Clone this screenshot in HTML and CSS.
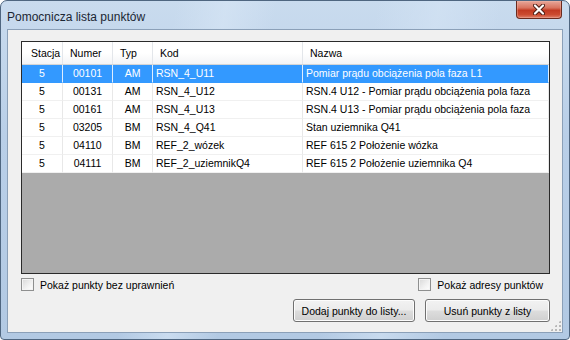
FILE: index.html
```html
<!DOCTYPE html>
<html lang="pl">
<head>
  <meta charset="UTF-8">
  <title>Pomocnicza lista punktów</title>
  <link rel="stylesheet" href="styles.css">
</head>
<body>
  <div class="window">
    <div class="titlebar">
      <span class="title">Pomocnicza lista punktów</span>
      <div class="close-btn">
        <svg width="12" height="11" viewBox="0 0 12 11">
          <path d="M2 1.5 L10 9.5 M10 1.5 L2 9.5" stroke="#4a1a12" stroke-width="4" stroke-linecap="round"/>
          <path d="M2 1.5 L10 9.5 M10 1.5 L2 9.5" stroke="#ffffff" stroke-width="2.2" stroke-linecap="round"/>
        </svg>
      </div>
    </div>
    <div class="client">
      <div class="grid">
        <div class="grid-head">
          <div class="hcell first">Stacja</div>
          <div class="hcell">Numer</div>
          <div class="hcell">Typ</div>
          <div class="hcell">Kod</div>
          <div class="hcell">Nazwa</div>
        </div>
        <div class="grid-row selected">
          <div class="cell center">5</div>
          <div class="cell center">00101</div>
          <div class="cell center">AM</div>
          <div class="cell">RSN_4_U11</div>
          <div class="cell">Pomiar prądu obciążenia pola faza L1</div>
        </div>
        <div class="grid-row">
          <div class="cell center">5</div>
          <div class="cell center">00131</div>
          <div class="cell center">AM</div>
          <div class="cell">RSN_4_U12</div>
          <div class="cell">RSN.4 U12 - Pomiar prądu obciążenia pola faza</div>
        </div>
        <div class="grid-row">
          <div class="cell center">5</div>
          <div class="cell center">00161</div>
          <div class="cell center">AM</div>
          <div class="cell">RSN_4_U13</div>
          <div class="cell">RSN.4 U13 - Pomiar prądu obciążenia pola faza</div>
        </div>
        <div class="grid-row">
          <div class="cell center">5</div>
          <div class="cell center">03205</div>
          <div class="cell center">BM</div>
          <div class="cell">RSN_4_Q41</div>
          <div class="cell">Stan uziemnika Q41</div>
        </div>
        <div class="grid-row">
          <div class="cell center">5</div>
          <div class="cell center">04110</div>
          <div class="cell center">BM</div>
          <div class="cell">REF_2_wózek</div>
          <div class="cell">REF 615 2 Położenie wózka</div>
        </div>
        <div class="grid-row">
          <div class="cell center">5</div>
          <div class="cell center">04111</div>
          <div class="cell center">BM</div>
          <div class="cell">REF_2_uziemnikQ4</div>
          <div class="cell">REF 615 2 Położenie uziemnika Q4</div>
        </div>
      </div>

      <div class="options">
        <label class="check"><span class="box"></span>Pokaż punkty bez uprawnień</label>
        <label class="check"><span class="box"></span>Pokaż adresy punktów</label>
      </div>

      <div class="buttons">
        <button class="btn btn-add">Dodaj punkty do listy...</button>
        <button class="btn btn-remove">Usuń punkty z listy</button>
      </div>

      <div class="grip"></div>
    </div>
  </div>
</body>
</html>
```

FILE: styles.css
```css
html, body {
  margin: 0;
  padding: 0;
  background: #ffffff;
}
body {
  font-family: 'Liberation Sans', Arial, sans-serif;
  font-size: 10.5px;
  color: #000;
}
.window {
  width: 570px;
  height: 340px;
  box-sizing: border-box;
  border: 1px solid #4f6680;
  border-radius: 7px 7px 4px 4px;
  background:
    linear-gradient(100deg, transparent 28%, #d6e5f5aa 36%, transparent 44%, transparent 60%, #d3e3f4aa 70%, transparent 80%),
    linear-gradient(180deg, #c9dbee 0%, #b9cfe8 40%, #b2c9e3 100%);
  display: flex;
  flex-direction: column;
  overflow: hidden;
}
.titlebar {
  height: 28px;
  display: flex;
  justify-content: space-between;
  flex-shrink: 0;
}
.title {
  font-size: 12px;
  color: #1b2633;
  padding: 9px 0 0 6px;
}
.close-btn {
  width: 46px;
  height: 18px;
  margin-right: 7px;
  box-sizing: border-box;
  border: 1px solid #6a2a1e;
  border-top: none;
  border-radius: 0 0 4px 4px;
  background: linear-gradient(180deg, #e8a79a 0%, #d9745f 40%, #c23a22 55%, #cc4b30 80%, #e0806a 100%);
  box-shadow: inset 0 0 0 1px #f0b8aa66;
  display: flex;
  align-items: center;
  justify-content: center;
}
.client {
  flex: 1;
  margin: 0 6px 6px 6px;
  border: 1px solid #8ba0b8;
  background: #f0f0f0;
  padding: 11px 12px 0 13px;
  position: relative;
  display: flex;
  flex-direction: column;
}

/* data grid */
.grid {
  height: 233px;
  box-sizing: border-box;
  border: 1px solid #2a2a2a;
  background: #ababab;
  flex-shrink: 0;
}
.grid-head, .grid-row {
  display: grid;
  grid-template-columns: 41px 50px 40px 150px 1fr;
}
.grid-head {
  height: 23px;
  background: linear-gradient(180deg, #ffffff 0%, #ffffff 50%, #f3f4f6 100%);
  border-bottom: 1px solid #d5d5d5;
  box-sizing: border-box;
}
.hcell {
  line-height: 22px;
  padding-left: 7px;
  border-right: 1px solid #e3e6ea;
  white-space: nowrap;
}
.hcell.first {
  padding-left: 9px;
}
.hcell:last-child {
  border-right: none;
}
.grid-row {
  height: 18px;
  background: #ffffff;
}
.cell {
  line-height: 17px;
  padding-left: 3px;
  border-right: 1px solid #e8e8e8;
  border-bottom: 1px solid #f0f0f0;
  white-space: nowrap;
  overflow: hidden;
}
.cell.center {
  text-align: center;
  padding-left: 0;
}
.grid-row.selected {
  background: #3399ff;
  color: #ffffff;
}
.grid-row.selected .cell {
  border-right-color: #dfeeff;
  border-bottom-color: #3399ff;
}

/* check boxes */
.options {
  display: flex;
  justify-content: space-between;
  margin-top: 3px;
  height: 15px;
  padding-right: 7px;
}
.check {
  display: flex;
  align-items: center;
  gap: 6px;
}
.box {
  width: 13px;
  height: 13px;
  box-sizing: border-box;
  border: 1px solid #8e8f8f;
  background: linear-gradient(135deg, #d8d8d8 0%, #f2f2f2 60%, #ffffff 100%);
  box-shadow: inset 0 0 0 1px #f4f4f4;
}

/* buttons */
.buttons {
  display: flex;
  justify-content: flex-end;
  gap: 10px;
  margin-top: 7px;
}
.btn {
  height: 23px;
  font-family: 'Liberation Sans', Arial, sans-serif;
  font-size: 10.5px;
  color: #000;
  border: 1px solid #707070;
  border-radius: 3px;
  background: linear-gradient(180deg, #f2f2f2 0%, #ebebeb 48%, #dddddd 52%, #cfcfcf 100%);
  box-shadow: inset 0 0 0 1px #fcfcfc;
  padding: 0;
}
.btn-add {
  width: 122px;
}
.btn-remove {
  width: 125px;
}
.grip {
  position: absolute;
  right: 1px;
  bottom: 1px;
  width: 11px;
  height: 11px;
  background:
    radial-gradient(circle, #b8b8b8 0.8px, transparent 1.2px) 0 0 / 4px 4px;
  clip-path: polygon(100% 0, 100% 100%, 0 100%);
}
```
